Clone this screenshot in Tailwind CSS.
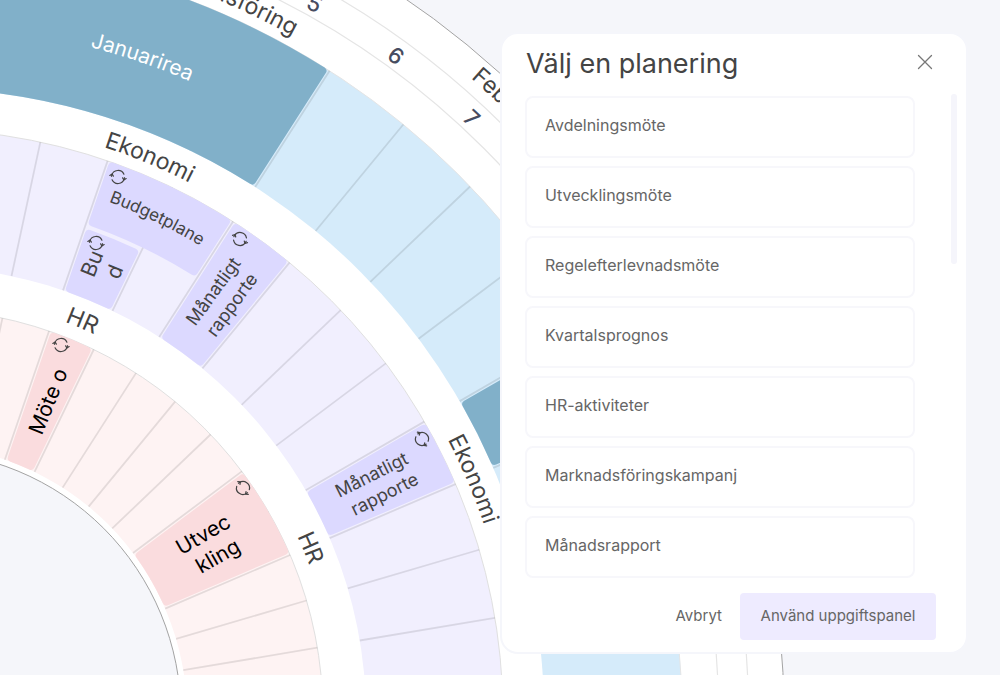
<!DOCTYPE html>
<html lang="sv">
<head>
    <meta charset="UTF-8">
    <meta name="viewport" content="width=device-width, initial-scale=1.0">
    <title>Välj en planering</title>
    <script src="https://cdn.jsdelivr.net/npm/@tailwindcss/browser@4"></script>
</head>
<body class="relative flex min-h-screen items-start justify-end overflow-hidden bg-[#f5f6fa] font-['Inter','Liberation_Sans',sans-serif]">
    <!-- Årshjul -->
    <svg id="wheel" class="absolute inset-0 h-full w-full" aria-label="Årshjul">
        <defs>
            <path id="r776" d="M0-776A776 776 0 0 1 776 0"/>
            <path id="r844" d="M0-844A844 844 0 0 1 844 0"/>
            <path id="r690" d="M0-690A690 690 0 0 1 690 0"/>
            <path id="r598" d="M0-598A598 598 0 0 1 598 0"/>
            <path id="r548" d="M0-548A548 548 0 0 1 548 0"/>
            <path id="r420" d="M0-420A420 420 0 0 1 420 0"/>
            <g id="repeat" fill="none" stroke="#444" stroke-width="1.2" stroke-linecap="round" stroke-linejoin="round">
                <path d="M-6.5 1V0A6.5 6.5 0 0 1 5-4.2"/>
                <path d="M6.5-1V0A6.5 6.5 0 0 1-5 4.2"/>
                <path d="M-8.3 .6L-6.5-1.4L-4.7 .4M8.3-.6L6.5 1.4L4.7-.4"/>
            </g>
        </defs>
        <g transform="translate(-83 715)">
            <circle r="867" fill="#fff" stroke="#a3a3a3" stroke-width="1"/>
            <circle r="831.5" fill="none" stroke="#e5e5e5" stroke-width="1.2"/>
            <circle r="801.5" fill="none" stroke="#e5e5e5" stroke-width="1.2"/>
            <circle r="765" fill="#d5ebfa" stroke="#e5e5e5"/>
            <circle r="627" fill="#fff"/>
            <circle r="586" fill="#f1effe" stroke="#e0e0e0"/>
            <circle r="449" fill="#fff"/>
            <circle r="406" fill="#fef3f3" stroke="#e0e0e0"/>
            <circle r="270" fill="#fff"/>
            <circle r="264" fill="#f5f6fa" stroke="#a3a3a3"/>
            <g id="dividers" stroke="#000" stroke-opacity=".1" stroke-width="1.8"></g>
            <g id="tasks"></g>

            <g fill="#444" font-size="23">
                <text text-anchor="end"><textPath href="#r776" startOffset="392">Marknadsföring</textPath></text>
                <text><textPath href="#r844" startOffset="604">Februari</textPath></text>
                <text><textPath href="#r598" startOffset="190">Ekonomi</textPath></text>
                <text><textPath href="#r598" startOffset="653">Ekonomi</textPath></text>
                <text><textPath href="#r420" startOffset="151">HR</textPath></text>
                <text><textPath href="#r420" startOffset="475">HR</textPath></text>
                <text font-size="17"><textPath href="#r548" startOffset="196">Budgetplane</textPath></text>
                <text fill="#fff" font-size="21"><textPath href="#r690" startOffset="175">Januarirea</textPath></text>
            </g>

            <g fill="#474c60" font-size="22" font-weight="500" text-anchor="middle">
                <text y="-807" transform="rotate(29.2)">5</text>
                <text y="-807" transform="rotate(36)">6</text>
                <text y="-807" transform="rotate(42.9)">7</text>
            </g>

            <g fill="#444" font-size="18" text-anchor="middle">
                <g transform="rotate(-54)"><text x="517" y="-3">Månatligt</text><text x="517" y="20">rapporte</text></g>
                <g transform="rotate(-26.6)"><text x="514" y="-5">Månatligt</text><text x="517" y="18">rapporte</text></g>
                <g transform="rotate(-67.6)" font-size="21"><text x="484" y="-3">Bu</text><text x="485" y="21">d</text></g>
            </g>
            <g fill="#000" font-size="21" text-anchor="middle">
                <text x="340" y="9" transform="rotate(-67.6)">Möte o</text>
                <g transform="rotate(-30)"><text x="338" y="-6">Utvec</text><text x="340" y="20">kling</text></g>
            </g>
        </g>
        <use href="#repeat" transform="translate(118 177) rotate(15)"/>
        <use href="#repeat" transform="translate(96 243) rotate(15)"/>
        <use href="#repeat" transform="translate(240 239) rotate(30)"/>
        <use href="#repeat" transform="translate(422 439) rotate(60)"/>
        <use href="#repeat" transform="translate(61 345) rotate(15)"/>
        <use href="#repeat" transform="translate(243 488) rotate(55)"/>
    </svg>

    <!-- Dialogruta -->
    <div role="dialog" aria-labelledby="dialog-title" class="relative mt-[34px] mr-[34px] w-[464px] rounded-2xl bg-white pb-3 ring-2 ring-[#f5f6fb]">
        <div class="flex items-start justify-between pt-3 pr-[33px] pl-6">
            <h1 id="dialog-title" class="text-[27px] leading-9 text-[#444]">Välj en planering</h1>
            <button type="button" aria-label="Stäng" class="mt-2 text-[#777]">
                <svg class="h-4 w-4" viewBox="0 0 16 16" fill="none" stroke="currentColor" stroke-width="1.3" stroke-linecap="round"><path d="M1.5 1.5l13 13M14.5 1.5l-13 13"/></svg>
            </button>
        </div>

        <div class="mt-3 flex justify-between pr-[9px] pl-[23px]">
            <div class="mt-[2px] flex w-[390px] flex-col gap-2 text-base text-[#666]">
                <button type="button" class="h-[62px] rounded-lg border-2 border-[#f7f7fb] pb-1 pl-[18px] text-left">Avdelningsmöte</button>
                <button type="button" class="h-[62px] rounded-lg border-2 border-[#f7f7fb] pb-1 pl-[18px] text-left">Utvecklingsmöte</button>
                <button type="button" class="h-[62px] rounded-lg border-2 border-[#f7f7fb] pb-1 pl-[18px] text-left">Regelefterlevnadsmöte</button>
                <button type="button" class="h-[62px] rounded-lg border-2 border-[#f7f7fb] pb-1 pl-[18px] text-left">Kvartalsprognos</button>
                <button type="button" class="h-[62px] rounded-lg border-2 border-[#f7f7fb] pb-1 pl-[18px] text-left">HR-aktiviteter</button>
                <button type="button" class="h-[62px] rounded-lg border-2 border-[#f7f7fb] pb-1 pl-[18px] text-left">Marknadsföringskampanj</button>
                <button type="button" class="h-[62px] rounded-lg border-2 border-[#f7f7fb] pb-1 pl-[18px] text-left">Månadsrapport</button>
            </div>
            <div class="h-[170px] w-[6px] rounded-full bg-[#f5f5fb]"></div>
        </div>

        <div class="mt-[15px] flex justify-end gap-[18px] pr-[30px] text-[15px] text-[#666]">
            <button type="button">Avbryt</button>
            <button type="button" class="h-[47px] w-[196px] rounded bg-[#eeebff]">Använd uppgiftspanel</button>
        </div>
    </div>

    <script>
        const NS = 'http://www.w3.org/2000/svg';
        const START = 12.15, STEP = 6.83;
        const week = n => START + n * STEP;

        function add(parent, tag, attrs) {
            const el = document.createElementNS(NS, tag);
            for (const key in attrs) el.setAttribute(key, attrs[key]);
            document.getElementById(parent).appendChild(el);
        }

        // veckolinjer i varje ring
        [[627, 765], [449, 586], [270, 406]].forEach(([inner, outer]) => {
            for (let n = 0; n < 12; n++) {
                add('dividers', 'line', { y1: -inner, y2: -outer, transform: `rotate(${week(n)})` });
            }
        });

        function point(r, deg) {
            const a = deg * Math.PI / 180;
            return `${r * Math.sin(a)} ${-r * Math.cos(a)}`;
        }

        // ringsegment med rundade hörn
        function segment(r0, r1, a0, a1, gap, c) {
            const deg = (px, r) => px / r * 180 / Math.PI;
            const i0 = a0 + deg(gap, r0), i1 = a1 - deg(gap, r0);
            const o0 = a0 + deg(gap, r1), o1 = a1 - deg(gap, r1);
            return `M${point(r0 + c, i0)}L${point(r1 - c, o0)}Q${point(r1, o0)} ${point(r1, o0 + deg(c, r1))}` +
                `A${r1} ${r1} 0 0 1 ${point(r1, o1 - deg(c, r1))}Q${point(r1, o1)} ${point(r1 - c, o1)}` +
                `L${point(r0 + c, i1)}Q${point(r0, i1)} ${point(r0, i1 - deg(c, r0))}` +
                `A${r0} ${r0} 0 0 0 ${point(r0, i0 + deg(c, r0))}Q${point(r0, i0)} ${point(r0 + c, i0)}Z`;
        }

        const tasks = [
            { from: -2, to: 3, inner: 627, outer: 765, fill: '#81b0c9' },
            { from: 7, to: 8, inner: 627, outer: 765, fill: '#81b0c9' },
            { from: 1, to: 3, inner: 519, outer: 586, fill: '#dcd9ff' },
            { from: 1, to: 2, inner: 449, outer: 515, fill: '#dcd9ff' },
            { from: 3, to: 4, inner: 449, outer: 586, fill: '#dcd9ff' },
            { from: 7, to: 8, inner: 449, outer: 586, fill: '#dcd9ff' },
            { from: 1, to: 2, inner: 270, outer: 406, fill: '#fadcde' },
            { from: 6, to: 8, inner: 270, outer: 406, fill: '#fadcde' }
        ];
        tasks.forEach(t => {
            add('tasks', 'path', { d: segment(t.inner, t.outer, week(t.from), week(t.to), 2, 4), fill: t.fill });
        });
    </script>
</body>
</html>
